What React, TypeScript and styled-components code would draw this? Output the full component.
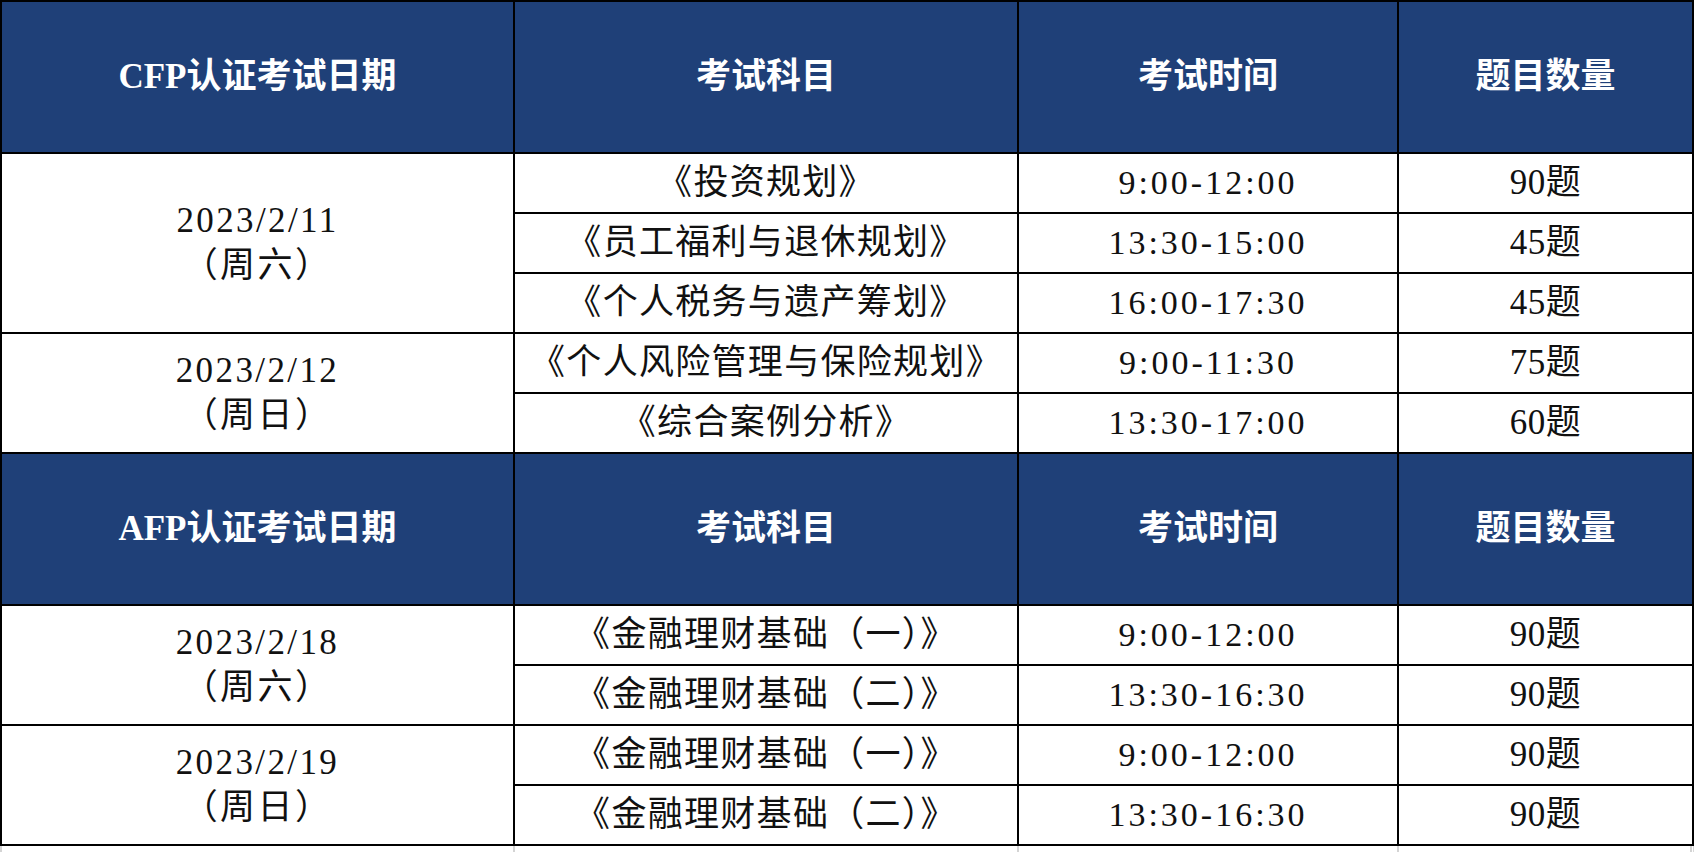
import React from "react";
import styled, { createGlobalStyle } from "styled-components";

const GlobalStyle = createGlobalStyle`
  html, body {
    margin: 0;
    padding: 0;
    background: #ffffff;
  }
  body {
    font-family: "Liberation Serif", "Noto Sans CJK SC", serif;
  }
`;

const Sheet = styled.div`
  width: 1693px;
  border-right: 1px solid #d9d9d9;
  background: #ffffff;
`;

const Table = styled.table`
  width: 1692px;
  border-collapse: collapse;
  table-layout: fixed;
  border: 2px solid #000;
`;

const HeadCell = styled.th`
  height: 150px;
  padding: 0;
  background: #1f4078;
  color: #ffffff;
  border: 2px solid #000;
  font-family: "Liberation Serif", "Noto Sans CJK SC", serif;
  font-size: 35px;
  font-weight: 700;
  line-height: 1.1;
  text-align: center;
  vertical-align: middle;
`;

type Kind = "subject" | "time" | "count" | "date";

const spacing: Record<Kind, string> = {
  subject: "1.3px",
  time: "3px",
  count: "0.5px",
  date: "2.4px",
};

const Cell = styled.td<{ $kind: Kind }>`
  height: 58px;
  padding: 0;
  border: 2px solid #000;
  color: #111;
  font-family: "Liberation Serif", "Noto Sans CJK SC", serif;
  font-size: ${(p) => (p.$kind === "time" ? "34px" : "35px")};
  font-weight: 400;
  text-align: center;
  vertical-align: middle;
  letter-spacing: ${(p) => spacing[p.$kind]};
  line-height: ${(p) => (p.$kind === "date" ? "45px" : "1.1")};
  white-space: nowrap;
`;

const DateLine = styled.div`
  display: block;
`;

const Tail = styled.div`
  display: grid;
  grid-template-columns: 513px 504px 380px 295px;
  height: 8px;
`;

const TailCell = styled.div`
  border-left: 2px solid #d4d4d4;
  &:last-child {
    border-right: 2px solid #d4d4d4;
  }
`;

type Exam = { subject: string; time: string; count: string };
type Day = { date: string; weekday: string; exams: Exam[] };
type Section = { title: string; days: Day[] };

const sections: Section[] = [
  {
    title: "CFP认证考试日期",
    days: [
      {
        date: "2023/2/11",
        weekday: "（周六）",
        exams: [
          { subject: "《投资规划》", time: "9:00-12:00", count: "90题" },
          { subject: "《员工福利与退休规划》", time: "13:30-15:00", count: "45题" },
          { subject: "《个人税务与遗产筹划》", time: "16:00-17:30", count: "45题" },
        ],
      },
      {
        date: "2023/2/12",
        weekday: "（周日）",
        exams: [
          { subject: "《个人风险管理与保险规划》", time: "9:00-11:30", count: "75题" },
          { subject: "《综合案例分析》", time: "13:30-17:00", count: "60题" },
        ],
      },
    ],
  },
  {
    title: "AFP认证考试日期",
    days: [
      {
        date: "2023/2/18",
        weekday: "（周六）",
        exams: [
          { subject: "《金融理财基础（一）》", time: "9:00-12:00", count: "90题" },
          { subject: "《金融理财基础（二）》", time: "13:30-16:30", count: "90题" },
        ],
      },
      {
        date: "2023/2/19",
        weekday: "（周日）",
        exams: [
          { subject: "《金融理财基础（一）》", time: "9:00-12:00", count: "90题" },
          { subject: "《金融理财基础（二）》", time: "13:30-16:30", count: "90题" },
        ],
      },
    ],
  },
];

export default function App() {
  return (
    <>
      <GlobalStyle />
      <Sheet>
        <Table>
          <colgroup>
            <col style={{ width: 513 }} />
            <col style={{ width: 504 }} />
            <col style={{ width: 380 }} />
            <col style={{ width: 295 }} />
          </colgroup>
          <tbody>
            {sections.map((s) => (
              <React.Fragment key={s.title}>
                <tr>
                  <HeadCell>{s.title}</HeadCell>
                  <HeadCell>考试科目</HeadCell>
                  <HeadCell>考试时间</HeadCell>
                  <HeadCell>题目数量</HeadCell>
                </tr>
                {s.days.map((d) =>
                  d.exams.map((e, i) => (
                    <tr key={d.date + i}>
                      {i === 0 && (
                        <Cell $kind="date" rowSpan={d.exams.length}>
                          <DateLine>{d.date}</DateLine>
                          <DateLine>{d.weekday}</DateLine>
                        </Cell>
                      )}
                      <Cell $kind="subject">{e.subject}</Cell>
                      <Cell $kind="time">{e.time}</Cell>
                      <Cell $kind="count">{e.count}</Cell>
                    </tr>
                  ))
                )}
              </React.Fragment>
            ))}
          </tbody>
        </Table>
        <Tail>
          <TailCell />
          <TailCell />
          <TailCell />
          <TailCell />
        </Tail>
      </Sheet>
    </>
  );
}
